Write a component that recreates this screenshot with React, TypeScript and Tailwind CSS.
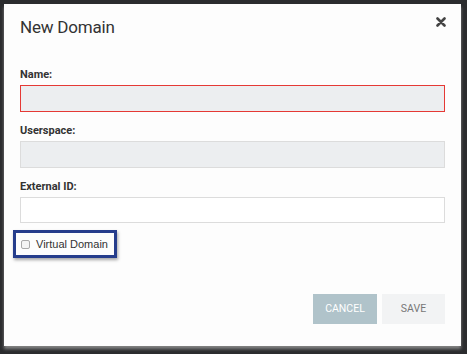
import React from "react";

export default function App() {
  return (
    <div className="w-[467px] h-[354px] bg-[#2b2c2e] pl-[4px] pt-[4px] overflow-hidden" style={{ fontFamily: "Roboto, 'Liberation Sans', sans-serif" }}>
      <div className="w-[457px] h-[342px] bg-[#fdfdfd] shadow-[0_3px_3px_rgba(140,140,140,0.9)] flex flex-col px-[16px]">
        <div className="flex items-start justify-between pt-[11px]">
          <div className="text-[17px] leading-[24px] tracking-[-0.2px] text-[#333]">New Domain</div>
          <svg width="10" height="10" viewBox="0 0 10 10" className="mt-[2px] mr-[-1px]">
            <path d="M1.5 1.5 L8.5 8.5 M8.5 1.5 L1.5 8.5" stroke="#444" strokeWidth="2.6" strokeLinecap="round" />
          </svg>
        </div>
        <div className="mt-[29px] text-[11px] font-bold text-[#333] leading-[14px]">Name:</div>
        <div className="mt-[3px] h-[27px] bg-[#eceef0] border border-[#e53935]" />
        <div className="mt-[12px] text-[11px] font-bold text-[#333] leading-[14px]">Userspace:</div>
        <div className="mt-[3px] h-[27px] bg-[#eceef0] border border-[#dcdcdc]" />
        <div className="mt-[12px] text-[11px] font-bold text-[#333] leading-[14px]">External ID:</div>
        <div className="mt-[3px] h-[26px] bg-white border border-[#dcdcdc]" />
        <div className="mt-[7px] ml-[-7px] w-[104px] h-[28px] border-[3px] border-[#263d8c] shadow-[1px_2px_3px_rgba(0,0,0,0.35)] flex items-center pl-[5px] whitespace-nowrap">
          <div className="w-[9px] h-[9px] rounded-[2px] border border-[#aaa] bg-[#f4f4f4] shrink-0" />
          <span className="ml-[6px] text-[11px] text-[#333]" style={{ fontFamily: "'Liberation Sans', Arial, sans-serif" }}>Virtual Domain</span>
        </div>
        <div className="mt-[36px] flex justify-end gap-[5px]">
          <div className="w-[64px] h-[30px] bg-[#b0c3ca] text-white text-[10.5px] flex items-center justify-center">CANCEL</div>
          <div className="w-[63px] h-[30px] bg-[#f2f3f4] text-[#777] text-[10.5px] flex items-center justify-center">SAVE</div>
        </div>
      </div>
    </div>
  );
}
